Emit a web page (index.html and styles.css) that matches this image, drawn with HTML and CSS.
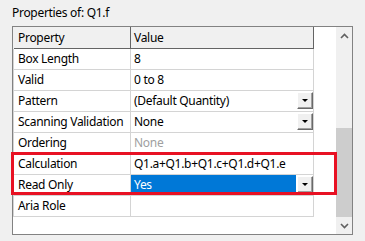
FILE: index.html
```html
<!DOCTYPE html>
<html lang="en">
<head>
  <meta charset="UTF-8" />
  <title>Properties</title>
  <link rel="stylesheet" href="styles.css">
</head>
<body>

<div class="caption">Properties of: Q1.f</div>

<div class="grid">
  <div class="sheet">
    <div class="row head">
      <div class="cell name">Property</div>
      <div class="cell value">Value</div>
    </div>
    <div class="row">
      <div class="cell name">Box Length</div>
      <div class="cell value">8</div>
    </div>
    <div class="row">
      <div class="cell name">Valid</div>
      <div class="cell value">0 to 8</div>
    </div>
    <div class="row">
      <div class="cell name">Pattern</div>
      <div class="cell value combo"><span class="text">(Default Quantity)</span><span class="drop"></span></div>
    </div>
    <div class="row">
      <div class="cell name">Scanning Validation</div>
      <div class="cell value combo"><span class="text">None</span><span class="drop"></span></div>
    </div>
    <div class="row">
      <div class="cell name">Ordering</div>
      <div class="cell value disabled">None</div>
    </div>
    <div class="highlight">
      <div class="row">
        <div class="cell name">Calculation</div>
        <div class="cell value">Q1.a+Q1.b+Q1.c+Q1.d+Q1.e</div>
      </div>
      <div class="row">
        <div class="cell name">Read Only</div>
        <div class="cell value combo"><span class="text selected">Yes</span><span class="drop"></span></div>
      </div>
    </div>
    <div class="row">
      <div class="cell name">Aria Role</div>
      <div class="cell value"></div>
    </div>
  </div>

  <div class="scrollbar">
    <div class="arrow">
      <svg width="9" height="6" viewBox="0 0 9 6"><polyline points="1,5 4.5,1.5 8,5" fill="none" stroke="#606060" stroke-width="1.6"/></svg>
    </div>
    <div class="track"><div class="thumb"></div></div>
    <div class="arrow">
      <svg width="9" height="6" viewBox="0 0 9 6"><polyline points="1,1 4.5,4.5 8,1" fill="none" stroke="#606060" stroke-width="1.6"/></svg>
    </div>
  </div>
</div>

</body>
</html>
```

FILE: styles.css
```css
body {
  font-family: "Noto Sans", "Open Sans", sans-serif;
  font-size: 12px;
  letter-spacing: -0.3px;
  background: #f0f0f0;
  color: #000;
  margin: 0;
  padding: 0;
}
.caption {
  padding: 5px 0 0 12px;
  line-height: 16px;
  height: 16px;
}
.grid {
  display: flex;
  margin: 5px 0 0 12px;
  width: 339px;
  height: 207px;
  border: 1px solid #828282;
}
.sheet {
  flex: 1;
  background: white;
}
.row {
  display: flex;
  width: 300px;
  border-left: 1px solid #d4d4d4;
}
.cell {
  height: 20px;
  line-height: 20px;
  border-right: 1px solid #d4d4d4;
  border-bottom: 1px solid #d4d4d4;
  white-space: nowrap;
  overflow: hidden;
}
.name {
  width: 112px;
  padding-left: 4px;
}
.value {
  width: 179px;
  padding-left: 3px;
}
.head {
  border-left-color: #f0f0f0;
}
.head .cell {
  height: 21px;
  line-height: 21px;
  background: #f0f0f0;
  border-right-color: #646464;
  border-bottom-color: #646464;
}
.disabled {
  color: #a0a0a0;
}
.combo {
  display: flex;
  padding-left: 0;
  width: 182px;
}
.combo .text {
  flex: 1;
  padding-left: 3px;
}
.combo .selected {
  background: #0078d7;
  color: white;
  margin-right: 1px;
}
.drop {
  position: relative;
  width: 14px;
  height: 15px;
  margin-top: 1px;
  background: #f0f0f0;
  border: 1px solid;
  border-color: #fff #696969 #696969 #fff;
  box-shadow: inset -1px -1px 0 #a0a0a0;
}
.drop::after {
  content: "";
  position: absolute;
  left: 4px;
  top: 6px;
  border-left: 3px solid transparent;
  border-right: 3px solid transparent;
  border-top: 3px solid #000;
}
.highlight {
  position: relative;
}
.highlight::after {
  content: "";
  position: absolute;
  left: -2px;
  right: -1px;
  top: -2px;
  bottom: 1px;
  border: 3px solid #e81123;
}
.scrollbar {
  width: 16px;
  display: flex;
  flex-direction: column;
  background: #f0f0f0;
}
.arrow {
  height: 17px;
  display: flex;
  align-items: center;
  justify-content: center;
}
.track {
  flex: 1;
  display: flex;
  flex-direction: column;
}
.thumb {
  margin-top: auto;
  height: 89px;
  background: #cdcdcd;
}
```
